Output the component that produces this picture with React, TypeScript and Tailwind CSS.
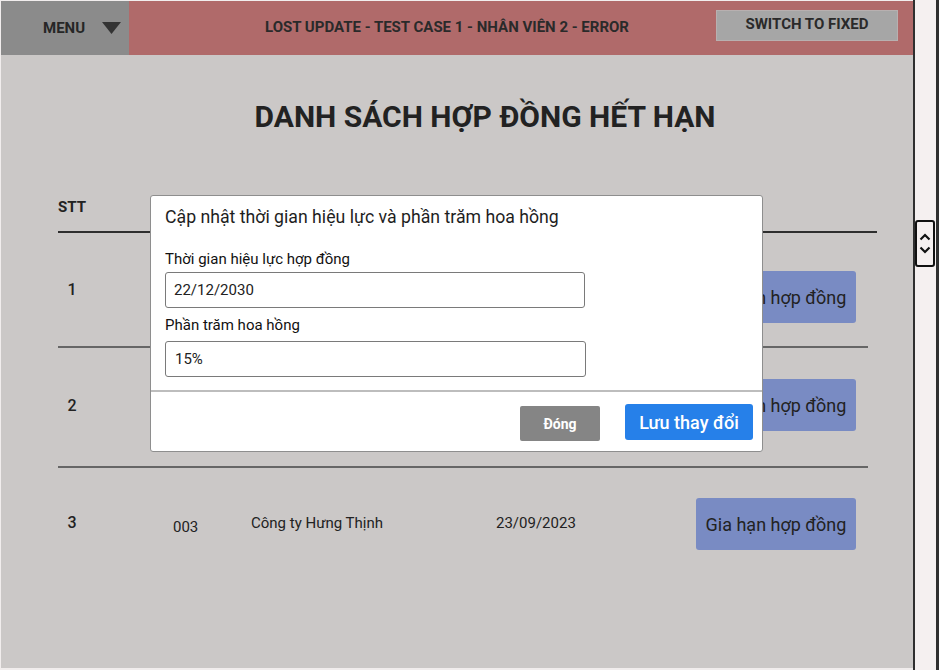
import React from 'react';

const rows = [
  { stt: '1', code: '', name: '', date: '', h: 'h-[115px] border-b-2', numPt: 'pt-[45px]', codePt: 'pt-[47px]', textPt: 'pt-[46px]', btnPt: 'pt-[38px]' },
  { stt: '2', code: '', name: '', date: '', h: 'h-[120px] border-b-2', numPt: 'pt-[46px]', codePt: 'pt-[47px]', textPt: 'pt-[48px]', btnPt: 'pt-[31px]' },
  { stt: '3', code: '003', name: 'Công ty Hưng Thịnh', date: '23/09/2023', h: 'h-[116px]', numPt: 'pt-[43px]', codePt: 'pt-[49px]', textPt: 'pt-[45px]', btnPt: 'pt-[30px]' },
];

const App: React.FC = () => {
  return (
    <div className="relative flex w-[939px] h-[670px] overflow-hidden bg-[#f1eded] font-['Roboto',sans-serif] text-[#222]">
      {/* Main page */}
      <div className="ml-px mt-px mb-[2px] w-[912px] flex flex-col bg-[#cbc8c7]">
        {/* Header bar */}
        <div className="flex h-[54px] bg-[#b06a6a]">
          <div className="flex h-[54px] w-[128px] items-center bg-[#8b8b8b] pl-[42px]">
            <span className="text-[15px] font-bold text-[#262626]">MENU</span>
            <svg className="ml-[17px]" width="19" height="12" viewBox="0 0 19 12">
              <polygon points="0,0 19,0 9.5,12" fill="#333" />
            </svg>
          </div>
          <div className="ml-[136px] flex items-center pb-[2px] text-[15px] font-bold text-[#2a2a2a]">
            LOST UPDATE - TEST CASE 1 - NHÂN VIÊN 2 - ERROR
          </div>
          <button className="ml-auto mr-[15px] mt-[9px] h-[31px] w-[182px] border border-[#b8b0b0] bg-[#a6a6a6] pb-[2px] text-[15px] font-bold text-[#2a2a2a]">
            SWITCH TO FIXED
          </button>
        </div>

        {/* Title */}
        <div className="ml-[56px] mt-[44px] text-center text-[30px] font-bold leading-[36px] text-[#222]">
          DANH SÁCH HỢP ĐỒNG HẾT HẠN
        </div>

        {/* Table */}
        <div className="ml-[57px] mt-[62px] flex flex-col">
          <div className="w-[819px] border-b-2 border-[#2e2e2e] pb-[14px]">
            <div className="text-[15px] font-bold leading-5">STT</div>
          </div>
          {rows.map((r) => (
            <div
              key={r.stt}
              className={`grid w-[810px] grid-cols-[115px_78px_245px_200px_160px] items-start border-[#666] ${r.h}`}
            >
              <div className={`w-[28px] text-center text-base font-medium leading-6 ${r.numPt}`}>{r.stt}</div>
              <div className={`text-[15px] leading-5 ${r.codePt}`}>{r.code}</div>
              <div className={`text-[15px] leading-5 ${r.textPt}`}>{r.name}</div>
              <div className={`text-[15px] leading-5 ${r.textPt}`}>{r.date}</div>
              <div className={r.btnPt}>
                <button className="h-[52px] w-[160px] rounded-[3px] bg-[#798bc3] text-[18px] text-[#222]">
                  Gia hạn hợp đồng
                </button>
              </div>
            </div>
          ))}
        </div>
      </div>

      {/* Right scroll strip */}
      <div className="relative w-[26px] border-l-2 border-r-[3px] border-[#2f2f2f] bg-[#f5f0f0]">
        <div className="absolute left-0 top-[220px] flex h-[47px] w-[20px] flex-col items-center justify-center gap-[5px] rounded-[3px] border-2 border-[#111]">
          <svg width="12" height="8" viewBox="0 0 12 8">
            <polyline points="1.5,6.5 6,2 10.5,6.5" fill="none" stroke="#111" strokeWidth="2.2" />
          </svg>
          <svg width="12" height="8" viewBox="0 0 12 8">
            <polyline points="1.5,1.5 6,6 10.5,1.5" fill="none" stroke="#111" strokeWidth="2.2" />
          </svg>
        </div>
      </div>

      {/* Modal */}
      <div className="absolute left-[150px] top-[195px] flex h-[257px] w-[613px] flex-col rounded-[3px] border border-[#8e8e8e] bg-white">
        <div className="pl-[14px] pt-[9px]">
          <div className="text-[17.7px] leading-6 text-[#1e1e1e]">
            Cập nhật thời gian hiệu lực và phần trăm hoa hồng
          </div>
          <div className="mt-[20px] text-[15px] leading-5 text-[#111]">Thời gian hiệu lực hợp đồng</div>
          <div className="mt-[3px] flex h-[36px] w-[420px] items-center rounded-[3px] border border-[#7a7a7a] px-[8px] text-[15px] text-[#222]">
            22/12/2030
          </div>
          <div className="mt-[7px] text-[15px] leading-5 text-[#111]">Phần trăm hoa hồng</div>
          <div className="mt-[6px] flex h-[36px] w-[421px] items-center rounded-[3px] border border-[#7a7a7a] px-[9px] text-[15px] text-[#222]">
            15%
          </div>
        </div>
        <div className="mt-[13px] border-t-2 border-[#bdbdbd]"></div>
        <div className="flex items-start justify-end gap-[25px] pr-[9px]">
          <button className="mt-[14px] h-[35px] w-[80px] rounded-[2px] bg-[#858585] text-sm font-bold text-white">
            Đóng
          </button>
          <button className="mt-[12px] h-[36px] w-[128px] rounded-[3px] bg-[#2680e9] text-[18px] font-medium text-white">
            Lưu thay đổi
          </button>
        </div>
      </div>
    </div>
  );
};

export default App;
